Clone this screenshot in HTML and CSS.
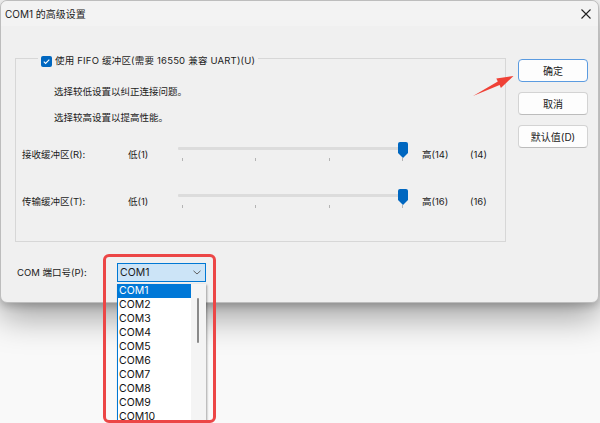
FILE: index.html
```html
<!DOCTYPE html>
<html lang="zh-CN">
<head>
<meta charset="utf-8">
<title>COM1 的高级设置</title>
<link rel="stylesheet" href="styles.css">
</head>
<body>
<div class="window">
  <div class="titlebar">
    <span class="title">COM1 的高级设置</span>
    <svg class="close" width="10" height="10" viewBox="0 0 10 10"><path d="M0.5 0.5 L9.5 9.5 M9.5 0.5 L0.5 9.5" stroke="#1f1f1f" stroke-width="1.1" fill="none"/></svg>
  </div>
  <div class="content">
    <div class="main">
      <div class="group">
        <div class="legend">
          <span class="check"><svg width="11" height="11" viewBox="0 0 11 11"><path d="M2.8 5.6 L4.6 7.4 L8.3 3.6" stroke="#fff" stroke-width="1.1" fill="none"/></svg></span>
          <span class="legend-text">使用 FIFO 缓冲区(需要 16550 兼容 UART)(U)</span>
        </div>
        <p class="hint first">选择较低设置以纠正连接问题。</p>
        <p class="hint">选择较高设置以提高性能。</p>
        <div class="slider-row">
          <span class="lbl">接收缓冲区(R):</span>
          <span class="lbl">低(1)</span>
          <div class="slider">
            <div class="track"></div>
            <div class="ticks"><i></i><i></i><i></i><i></i></div>
            <svg class="thumb" width="10" height="16" viewBox="0 0 10 16"><path d="M2 0 H8 Q10 0 10 2 V11 L5 16 L0 11 V2 Q0 0 2 0 Z" fill="#0067c0"/></svg>
          </div>
          <span class="lbl">高(14)</span>
          <span class="lbl">(14)</span>
        </div>
        <div class="slider-row second">
          <span class="lbl">传输缓冲区(T):</span>
          <span class="lbl">低(1)</span>
          <div class="slider">
            <div class="track"></div>
            <div class="ticks"><i></i><i></i><i></i><i></i></div>
            <svg class="thumb" width="10" height="16" viewBox="0 0 10 16"><path d="M2 0 H8 Q10 0 10 2 V11 L5 16 L0 11 V2 Q0 0 2 0 Z" fill="#0067c0"/></svg>
          </div>
          <span class="lbl">高(16)</span>
          <span class="lbl">(16)</span>
        </div>
      </div>
      <div class="port-row">
        <span class="port-label">COM 端口号(P):</span>
        <div class="combo-wrap">
          <div class="combo">
            <span>COM1</span>
            <svg width="8" height="5" viewBox="0 0 8 5"><path d="M0.5 0.8 L4 4 L7.5 0.8" stroke="#606060" stroke-width="1" fill="none"/></svg>
          </div>
          <div class="dropdown">
            <ul class="items">
              <li class="selected">COM1</li>
              <li>COM2</li>
              <li>COM3</li>
              <li>COM4</li>
              <li>COM5</li>
              <li>COM6</li>
              <li>COM7</li>
              <li>COM8</li>
              <li>COM9</li>
              <li>COM10</li>
            </ul>
            <div class="scrollbar"><div class="sthumb"></div></div>
          </div>
          <div class="annot-box"></div>
        </div>
      </div>
    </div>
    <div class="buttons">
      <div class="btn default">确定</div>
      <div class="btn">取消</div>
      <div class="btn">默认值(D)</div>
    </div>
  </div>
</div>
<svg class="arrow" width="600" height="423" viewBox="0 0 600 423">
  <polygon points="473,96 499.6,85 500.9,88 513.5,76 496.3,78.5 497.8,81.6" fill="#ef4136"/>
</svg>
</body>
</html>
```
FILE: styles.css
```css
* { box-sizing: border-box; }
html, body { margin: 0; padding: 0; }
body {
  width: 600px;
  height: 423px;
  overflow: hidden;
  background: #f9f9f9;
  font-family: "Inter", "Noto Sans CJK SC", sans-serif;
  font-size: 9.5px;
  color: #1b1b1b;
  position: relative;
}
.window {
  position: relative;
  width: 599px;
  height: 303px;
  background: #f0f0f0;
  border: 1px solid #bdbdbd;
  border-radius: 7px;
  box-shadow: 0 14px 34px rgba(0,0,0,0.36), 0 3px 8px rgba(0,0,0,0.2);
}
.titlebar {
  height: 25px;
  display: flex;
  align-items: center;
  justify-content: space-between;
  padding: 0 7px 0 4px;
  background: #f3f3f3;
  border-radius: 7px 7px 0 0;
}
.title { font-size: 10px; line-height: 16px; }
.content {
  display: flex;
  align-items: flex-start;
  gap: 12px;
  padding: 32px 0 0 14px;
}
.main { width: 491px; }
.group {
  width: 491px;
  height: 184px;
  border: 1px solid #d7d7d7;
  padding: 0 6px;
}
.legend {
  display: flex;
  align-items: center;
  gap: 3px;
  width: fit-content;
  height: 16px;
  margin: -6px 0 0 16px;
  padding: 0 3px;
  background: #f0f0f0;
  line-height: 16px;
}
.legend-text { letter-spacing: 0.2px; }
.check {
  display: flex;
  width: 11px;
  height: 11px;
  background: #0067c0;
  border-radius: 2px;
}
.hint {
  margin: 15px 0 0 32px;
  line-height: 16px;
}
.hint + .hint { margin-top: 10px; }
.slider-row {
  display: grid;
  grid-template-columns: 106px 50px 244px 48px auto;
  align-items: start;
  height: 24px;
  margin-top: 16px;
}
.slider-row.second { margin-top: 23px; }
.lbl { padding-top: 5px; line-height: 16px; }
.slider { position: relative; height: 24px; }
.track {
  width: 224px;
  height: 3px;
  margin-top: 5px;
  background: #dcdcdc;
  border-radius: 1px;
}
.ticks {
  display: flex;
  justify-content: space-between;
  width: 221px;
  margin: 8px 0 0 4px;
}
.ticks i {
  display: block;
  width: 1px;
  height: 3px;
  background: #b4b4b4;
}
.thumb { position: absolute; left: 220px; top: 0; }
.port-row {
  display: flex;
  align-items: center;
  margin-top: 21px;
  padding-left: 2px;
}
.port-label { width: 100px; line-height: 16px; }
.combo-wrap { position: relative; }
.combo {
  width: 89px;
  height: 19px;
  display: flex;
  align-items: center;
  justify-content: space-between;
  padding: 0 4px 0 2px;
  background: #cce4f7;
  border: 1px solid #0078d4;
  font-size: 10.5px;
}
.dropdown {
  position: absolute;
  left: 0;
  top: 21px;
  width: 89px;
  height: 142px;
  display: flex;
  background: #fff;
  border-left: 1px solid #0078d4;
  box-shadow: 1px 1px 2px rgba(0,0,0,0.35);
  z-index: 2;
}
.items {
  list-style: none;
  margin: 0;
  padding: 0;
  width: 73px;
}
.items li {
  height: 14px;
  line-height: 14px;
  padding-left: 1px;
  font-size: 10.5px;
  color: #111;
}
.items li.selected { background: #0078d7; color: #fff; }
.scrollbar {
  position: relative;
  flex: 1;
  background: #f4f4f4;
}
.sthumb {
  position: absolute;
  left: 6px;
  top: 14px;
  width: 2px;
  height: 45px;
  background: #8a8a8a;
  border-radius: 1px;
}
.annot-box {
  position: absolute;
  left: -14px;
  top: -9px;
  width: 113px;
  height: 169px;
  border: 3px solid #ec4646;
  border-radius: 6px;
  z-index: 3;
}
.buttons {
  display: flex;
  flex-direction: column;
  gap: 10px;
  margin-top: 1px;
}
.btn {
  width: 70px;
  height: 23px;
  display: flex;
  align-items: center;
  justify-content: center;
  background: #fdfdfd;
  border: 1px solid #d3d3d3;
  border-bottom-color: #bcbcbc;
  border-radius: 4px;
  font-size: 10px;
}
.btn.default { border-color: #5b9be0; }
.arrow {
  position: absolute;
  left: 0;
  top: 0;
  pointer-events: none;
  z-index: 5;
}
```
